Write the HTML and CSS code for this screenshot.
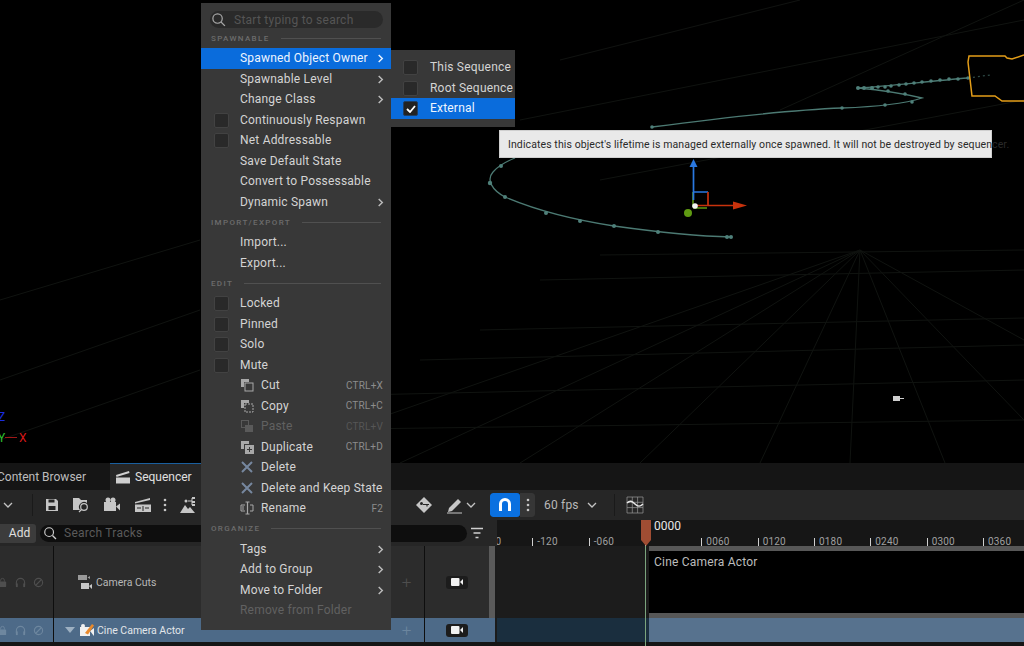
FILE: index.html
```html
<!DOCTYPE html>
<html lang="en">
<head>
<meta charset="utf-8">
<title>Sequencer</title>
<link rel="stylesheet" href="styles.css">
</head>
<body>
<svg class="defs" width="0" height="0" aria-hidden="true">
  <symbol id="i-chev" viewBox="0 0 10 10"><path d="M3 1l4 4-4 4" fill="none" stroke="currentColor" stroke-width="1.6"/></symbol>
  <symbol id="i-down" viewBox="0 0 10 10"><path d="M1 3l4 4 4-4" fill="none" stroke="currentColor" stroke-width="1.3"/></symbol>
  <symbol id="i-search" viewBox="0 0 16 16"><circle cx="7" cy="7" r="5" fill="none" stroke="currentColor" stroke-width="1.3"/><path d="M10.8 10.8l4 4" stroke="currentColor" stroke-width="1.5"/></symbol>
  <symbol id="i-cut" viewBox="0 0 14 14"><path d="M1 1h8v3H4v5H1z" fill="currentColor"/><rect x="5" y="5" width="8" height="8" fill="none" stroke="currentColor"/></symbol>
  <symbol id="i-copy" viewBox="0 0 14 14"><path d="M1 1h8v3H4v5H1z" fill="currentColor"/><rect x="5" y="5" width="8" height="8" fill="none" stroke="currentColor" stroke-dasharray="2 1"/></symbol>
  <symbol id="i-paste" viewBox="0 0 14 14"><rect x="1.500" y="1.500" width="7" height="7" fill="none" stroke="currentColor"/><rect x="5" y="6" width="8" height="7" fill="currentColor"/></symbol>
  <symbol id="i-dup" viewBox="0 0 14 14"><path d="M1 1h8v3H4v5H1z" fill="currentColor"/><rect x="5" y="5" width="9" height="9" fill="currentColor"/><path d="M9.500 7v5M7 9.500h5" stroke="#383838"/></symbol>
  <symbol id="i-x" viewBox="0 0 14 14"><path d="M2 2l10 10M12 2L2 12" stroke="currentColor" stroke-width="2"/></symbol>
  <symbol id="i-rename" viewBox="0 0 14 14"><path d="M5 4H1v6h4M10 4h3v6h-3" fill="none" stroke="currentColor"/><path d="M2 6h2M2 8h2" stroke="currentColor"/><path d="M5.500 1h4M5.500 13h4M7.500 1v12" stroke="currentColor" stroke-width="1.200" fill="none"/></symbol>
  <symbol id="i-lock" viewBox="0 0 12 12"><rect x="2" y="5" width="8" height="6" rx="1" fill="currentColor"/><path d="M4 5V3.500a2 2 0 014 0V5" fill="none" stroke="currentColor"/></symbol>
  <symbol id="i-head" viewBox="0 0 12 12"><path d="M1.500 9V6a4.500 4.500 0 019 0v3" fill="none" stroke="currentColor" stroke-width="1.200"/><rect x="1" y="7" width="2" height="4" fill="currentColor"/><rect x="9" y="7" width="2" height="4" fill="currentColor"/></symbol>
  <symbol id="i-ban" viewBox="0 0 12 12"><circle cx="6" cy="6" r="4.500" fill="none" stroke="currentColor" stroke-width="1.200"/><path d="M3 9l6-6" stroke="currentColor" stroke-width="1.200"/></symbol>
  <symbol id="i-cam" viewBox="0 0 14 10"><rect x="1" y="1" width="8.500" height="8" rx="1" fill="currentColor"/><path d="M10 5l3-3v6z" fill="currentColor"/></symbol>
  <symbol id="i-dots" viewBox="0 0 4 14"><circle cx="2" cy="2" r="1.300" fill="currentColor"/><circle cx="2" cy="7" r="1.300" fill="currentColor"/><circle cx="2" cy="12" r="1.300" fill="currentColor"/></symbol>
</svg>

<main class="app">
  <section class="viewport">
    <svg class="scene" width="1024" height="463" viewBox="0 0 1024 463" aria-hidden="false">
      <g class="grid">
        <path d="M860 250L250 463M860 250L400 463M860 250L520 463M860 250L640 463M860 250L760 463M860 250L850 463M860 250L945 463M860 250L1024 420M860 250L1024 340"/>
        <path d="M480 330L1024 318M420 360L1024 345M360 395L1024 380M280 430L1024 420M0 380L200 310M0 440L200 370M0 300L200 240M540 280L1024 270M600 255L1024 250"/>
        <path d="M520 120L1024 20M600 180L1024 100M780 110L1024 0M560 60L800 0"/>
      </g>
      <g class="path-line">
        <path d="M731 237C690 236 650 231 614 226C575 220 540 212 505 197C492 190 486 180 493 172C498 166 505 162 515 158"/>
        <path d="M652 127C720 118 790 110 842 108C870 107 900 105 922 98C905 94 880 90 858 88C890 86 930 81 968 78"/>
        <path class="dash" d="M968 78L990 75"/>
      </g>
      <g class="path-dots">
        <circle cx="731" cy="237" r="2"/><circle cx="727" cy="237" r="2"/><circle cx="658" cy="232" r="2"/><circle cx="614" cy="226" r="2"/><circle cx="580" cy="221" r="2"/><circle cx="546" cy="213" r="2"/><circle cx="505" cy="197" r="2"/><circle cx="490" cy="183" r="2.200"/><circle cx="501" cy="166" r="2"/>
        <circle cx="652" cy="127" r="1.800"/><circle cx="842" cy="108" r="1.800"/><circle cx="885" cy="105" r="1.800"/><circle cx="912" cy="102" r="1.800"/><circle cx="888" cy="91" r="1.800"/><circle cx="905" cy="94" r="1.800"/><circle cx="858" cy="88" r="2"/><circle cx="864" cy="88" r="2"/><circle cx="872" cy="88" r="2"/><circle cx="878" cy="87" r="1.800"/><circle cx="885" cy="87" r="1.800"/><circle cx="891" cy="86" r="1.800"/><circle cx="899" cy="85" r="1.800"/><circle cx="906" cy="84" r="1.800"/><circle cx="914" cy="83" r="1.800"/><circle cx="922" cy="82" r="1.800"/><circle cx="931" cy="81" r="1.800"/><circle cx="940" cy="80" r="1.800"/><circle cx="949" cy="79" r="1.800"/><circle cx="958" cy="79" r="1.800"/><circle cx="968" cy="78" r="1.800"/>
      </g>
      <path class="frustum" d="M1024 55L1012 59L1007 58L1005 56H969L968 62L972 96H995L1002 101H1024"/>
      <g class="gizmo">
        <path class="g" d="M693 192V207M693 208H707"/>
        <path class="b" d="M693.500 200V165M693 192H708"/>
        <path class="bf" d="M693.500 159l4 8h-8z"/>
        <path class="r" d="M708 192V205M695 205.500H735"/>
        <path class="rf" d="M733 201.500l14 4-14 4z"/>
        <circle class="gd" cx="688" cy="213" r="4"/>
        <circle class="wd" cx="695" cy="206" r="2.800"/>
      </g>
      <g class="marker"><rect x="893" y="396" width="7" height="5"/><path d="M900 398.500h4"/></g>
      <g class="axis">
        <path d="M5 437.500H17"/>
        <text class="az" x="-2" y="421">Z</text>
        <text class="ay" x="-2" y="442">Y</text>
        <text class="ax" x="19" y="442">X</text>
      </g>
    </svg>
  </section>

  <section class="panel">
    <div class="tabs">
      <div class="tab">Content Browser</div>
      <div class="tab tab-active">
        <svg class="tab-icon" width="16" height="14" viewBox="0 0 16 14"><path d="M1 5L14 1l.5 2L1.500 7z" fill="#cfcfcf"/><rect x="1" y="7.500" width="14" height="6" fill="#cfcfcf"/></svg>
        Sequencer
      </div>
    </div>

    <div class="toolbar">
      <svg class="tb-chev"><use href="#i-down"/></svg>
      <span class="tb-sep"></span>
      <svg class="tb-i save" viewBox="0 0 14 14"><path d="M1 1h10l2 2v10H1z" fill="currentColor"/><rect x="3.500" y="1.500" width="6" height="3" fill="#262626"/><rect x="3.500" y="8" width="7" height="4" fill="#262626"/></svg>
      <svg class="tb-i folder" viewBox="0 0 18 18"><path d="M1 2h6l2 2h6v3a5 5 0 00-7 7H1z" fill="currentColor"/><circle cx="12" cy="11" r="3.300" fill="none" stroke="currentColor" stroke-width="1.200"/><path d="M9.500 13.500L7 16" stroke="currentColor" stroke-width="1.200"/></svg>
      <svg class="tb-i cam" viewBox="0 0 18 16"><circle cx="5" cy="3" r="2.500" fill="currentColor"/><circle cx="10" cy="3" r="2.500" fill="currentColor"/><rect x="1" y="5" width="12" height="9" fill="currentColor"/><path d="M13 9.500l4-3v7z" fill="currentColor"/></svg>
      <svg class="tb-i clap" viewBox="0 0 18 16"><path d="M1 5L16 1v2L1 6.500z" fill="currentColor"/><rect x="1" y="7.500" width="16" height="7.500" fill="currentColor"/><path d="M9 9v5M3 11h4M11 11h4" stroke="#262626"/></svg>
      <svg class="tb-dots"><use href="#i-dots"/></svg>
      <svg class="tb-i tree" viewBox="0 0 18 18"><path d="M1 17l5-8 3 4 2-2 5 6z" fill="currentColor"/><circle cx="7" cy="5" r="1.500" fill="currentColor"/><path d="M9 5h4M13 2v7" stroke="currentColor"/><rect x="13" y="1" width="3" height="2" fill="currentColor"/><rect x="13" y="5" width="3" height="2" fill="currentColor"/><rect x="13" y="8" width="3" height="2" fill="currentColor"/></svg>

      <svg class="tb-i key" viewBox="0 0 18 18"><path d="M9 1l8 8-8 8-8-8z" fill="currentColor"/><circle cx="6.500" cy="7.500" r="1.500" fill="#262626"/><path d="M8 8.500h6M12 8.500v2" stroke="#262626" stroke-width="1.200"/></svg>
      <svg class="tb-i pen" viewBox="0 0 18 18"><path d="M3 12L12 3l3 3-9 9-4 1z" fill="currentColor"/><path d="M1 17h15" stroke="currentColor"/></svg>
      <svg class="tb-chev pen-chev"><use href="#i-down"/></svg>
      <div class="snap">
        <span class="snap-on"><svg width="14" height="16" viewBox="0 0 14 16"><path d="M2.500 14V7a4.500 4.500 0 019 0v7" fill="none" stroke="#fff" stroke-width="3"/></svg></span>
        <span class="snap-more"><svg class="tb-dots"><use href="#i-dots"/></svg></span>
      </div>
      <span class="fps">60 fps</span>
      <svg class="tb-chev fps-chev"><use href="#i-down"/></svg>
      <span class="tb-sep sep-right"></span>
      <svg class="tb-i curve" viewBox="0 0 18 18"><path d="M1 1h16v16H1zM6.300 1v16M11.600 1v16M1 6.300h16M1 11.600h16" fill="none" stroke="#9a9a9a" stroke-width=".7"/><path d="M1 7c3-3 5-2 8 1s5 3 8 0" fill="none" stroke="#e8e8e8" stroke-width="1.500"/></svg>
    </div>

    <div class="filterbar">
      <div class="filter-left">
        <button class="add">Add</button>
        <div class="track-search">
          <svg class="ts-icon"><use href="#i-search"/></svg>
          <span>Search Tracks</span>
        </div>
        <svg class="funnel" width="14" height="12" viewBox="0 0 14 12"><path d="M1 1.500h12M3.500 6h7M5.500 10.500h3" stroke="#cfcfcf" stroke-width="1.500"/></svg>
      </div>
      <div class="ruler">
        <div class="ticks">
          <span class="tick">-180</span><span class="tick">-120</span><span class="tick">-060</span><span class="tick tick-zero"></span><span class="tick">0060</span><span class="tick">0120</span><span class="tick">0180</span><span class="tick">0240</span><span class="tick">0300</span><span class="tick">0360</span>
        </div>
        <span class="frame-now">0000</span>
      </div>
    </div>

    <div class="tracks">
      <div class="track track-cuts">
        <div class="t-toggles">
          <svg><use href="#i-lock"/></svg><svg><use href="#i-head"/></svg><svg><use href="#i-ban"/></svg>
        </div>
        <div class="t-name name-cuts">
          <svg class="cuts-icon" viewBox="0 0 14 16"><path d="M0 1h9v5H0zM9.500 3.500L12 2v3z" fill="#9a9a9a"/><path d="M3 9h8v6H3zM11 12l3-2v5z" fill="#c8c8c8"/></svg>
          Camera Cuts
        </div>
        <div class="t-plus">+</div>
        <div class="t-cam"><span class="cam-btn"><svg width="14" height="10"><use href="#i-cam"/></svg></span></div>
        <div class="t-scroll"></div>
        <div class="t-lane lane-cuts">
          <div class="lane-pad"></div>
          <div class="section section-black">Cine Camera Actor</div>
        </div>
      </div>
      <div class="track track-actor">
        <div class="t-toggles">
          <svg><use href="#i-lock"/></svg><svg><use href="#i-head"/></svg><svg><use href="#i-ban"/></svg>
        </div>
        <div class="t-name name-actor">
          <span class="tri"></span>
          <svg class="actor-icon" viewBox="0 0 14 14"><rect x="0" y="4" width="10" height="9" fill="#f0f0f0"/><path d="M10 8l4-3v8z" fill="#f0f0f0"/><circle cx="3" cy="3" r="2" fill="#f0f0f0"/><path d="M5 10L12 1l2 1.500-6 9z" fill="#e8892c"/></svg>
          Cine Camera Actor
        </div>
        <div class="t-plus">+</div>
        <div class="t-cam"><span class="cam-btn"><svg width="14" height="10"><use href="#i-cam"/></svg></span></div>
        <div class="t-scroll t-scroll-off"></div>
        <div class="t-lane lane-actor">
          <div class="lane-pad"></div>
          <div class="section section-blue"></div>
        </div>
      </div>
    </div>
    <div class="playhead"><svg width="12" height="26" viewBox="0 0 12 26"><path d="M1 0h10v20l-5 6-5-6z" fill="#a04d33"/></svg></div>
    <div class="playline"></div>
  </section>
</main>

<nav class="menu main-menu">
  <div class="menu-search">
    <svg><use href="#i-search"/></svg>
    <span>Start typing to search</span>
  </div>
  <div class="head">SPAWNABLE</div>
  <div class="row row-on"><span class="label">Spawned Object Owner</span><svg class="more"><use href="#i-chev"/></svg></div>
  <div class="row"><span class="label">Spawnable Level</span><svg class="more"><use href="#i-chev"/></svg></div>
  <div class="row"><span class="label">Change Class</span><svg class="more"><use href="#i-chev"/></svg></div>
  <div class="row"><span class="box"></span><span class="label">Continuously Respawn</span></div>
  <div class="row"><span class="box"></span><span class="label">Net Addressable</span></div>
  <div class="row"><span class="label">Save Default State</span></div>
  <div class="row"><span class="label">Convert to Possessable</span></div>
  <div class="row"><span class="label">Dynamic Spawn</span><svg class="more"><use href="#i-chev"/></svg></div>
  <div class="head">IMPORT/EXPORT</div>
  <div class="row"><span class="label">Import...</span></div>
  <div class="row"><span class="label">Export...</span></div>
  <div class="head">EDIT</div>
  <div class="row"><span class="box"></span><span class="label">Locked</span></div>
  <div class="row"><span class="box"></span><span class="label">Pinned</span></div>
  <div class="row"><span class="box"></span><span class="label">Solo</span></div>
  <div class="row"><span class="box"></span><span class="label">Mute</span></div>
  <div class="row"><svg class="ico"><use href="#i-cut"/></svg><span class="label">Cut</span><span class="key-hint">CTRL+X</span></div>
  <div class="row"><svg class="ico"><use href="#i-copy"/></svg><span class="label">Copy</span><span class="key-hint">CTRL+C</span></div>
  <div class="row row-off"><svg class="ico"><use href="#i-paste"/></svg><span class="label">Paste</span><span class="key-hint">CTRL+V</span></div>
  <div class="row"><svg class="ico"><use href="#i-dup"/></svg><span class="label">Duplicate</span><span class="key-hint">CTRL+D</span></div>
  <div class="row"><svg class="ico ico-x"><use href="#i-x"/></svg><span class="label">Delete</span></div>
  <div class="row"><svg class="ico ico-x"><use href="#i-x"/></svg><span class="label">Delete and Keep State</span></div>
  <div class="row"><svg class="ico"><use href="#i-rename"/></svg><span class="label">Rename</span><span class="key-hint">F2</span></div>
  <div class="head">ORGANIZE</div>
  <div class="row"><span class="label">Tags</span><svg class="more"><use href="#i-chev"/></svg></div>
  <div class="row"><span class="label">Add to Group</span><svg class="more"><use href="#i-chev"/></svg></div>
  <div class="row"><span class="label">Move to Folder</span><svg class="more"><use href="#i-chev"/></svg></div>
  <div class="row row-off"><span class="label">Remove from Folder</span></div>
</nav>

<nav class="menu sub-menu">
  <div class="row"><span class="box"></span><span class="label">This Sequence</span></div>
  <div class="row"><span class="box"></span><span class="label">Root Sequence</span></div>
  <div class="row row-on"><span class="box box-on"><svg width="10" height="8" viewBox="0 0 10 8"><path d="M1 4l3 3 5-6" fill="none" stroke="#fff" stroke-width="1.800"/></svg></span><span class="label">External</span></div>
</nav>

<div class="tooltip">Indicates this object's lifetime is managed externally once spawned. It will not be destroyed by sequencer.</div>
</body>
</html>
```
FILE: styles.css
```css
* { box-sizing: border-box; }
html, body { margin: 0; padding: 0; }
body {
  width: 1024px;
  height: 646px;
  overflow: hidden;
  position: relative;
  background: #000;
  font-family: Roboto, "Liberation Sans", sans-serif;
  color: #c8c8c8;
}
.defs { position: absolute; }
.app { display: flex; flex-direction: column; height: 646px; }
.viewport { height: 463px; flex: none; background: #000; overflow: hidden; }
.scene { display: block; }
.grid path { stroke: #101310; stroke-width: 1; fill: none; }
.path-line path { fill: none; stroke: #4c7a73; stroke-width: 1.300; }
.path-line .dash { stroke: #2e4a46; stroke-dasharray: 2 3; }
.path-dots circle { fill: #4f807a; }
.frustum { fill: none; stroke: #e39d18; stroke-width: 1.500; }
.gizmo path { fill: none; stroke-width: 1.500; }
.gizmo .g { stroke: #5f9a12; }
.gizmo .b { stroke: #2a78e0; stroke-width: 1.700; }
.gizmo .r { stroke: #c8320c; stroke-width: 1.700; }
.gizmo .bf { fill: #2a78e0; stroke: none; }
.gizmo .rf { fill: #c8320c; stroke: none; }
.gd { fill: #5f9a12; }
.wd { fill: #f4f4f4; }
.marker rect { fill: #cfcfcf; }
.marker path { stroke: #cfcfcf; }
.axis path { stroke: #a01818; }
.axis text { font-size: 12px; font-family: Roboto, sans-serif; }
.az { fill: #1a2ce0; }
.ay { fill: #2fc02f; }
.ax { fill: #d81818; }

/* Bottom panel */
.panel { flex: 1; position: relative; display: flex; flex-direction: column; background: #151515; overflow: hidden; }
.tabs { height: 27px; flex: none; display: flex; background: #151515; padding-left: 0; }
.tab { font-size: 12px; color: #bdbdbd; display: flex; align-items: center; margin-left: -3px; width: 113px; }
.tab-active { margin-left: 0; width: 130px; background: #262626; border-top: 1px solid #1a5f9e; color: #e0e0e0; padding-left: 5px; gap: 2px; }
.tab-icon { margin-right: 2px; }

.toolbar { height: 30px; flex: none; display: flex; align-items: center; background: #262626; color: #c4c4c4; }
.tb-chev { width: 10px; height: 10px; color: #c4c4c4; flex: none; margin-left: 3px; }
.tb-sep { width: 1px; height: 22px; background: #1a1a1a; flex: none; margin-left: 19px; }
.tb-i { flex: none; width: 18px; height: 18px; color: #c6c6c6; }
.tb-dots { width: 4px; height: 14px; color: #c6c6c6; flex: none; }
.save { width: 14px; height: 14px; margin-left: 12px; }
.folder { margin-left: 13px; }
.cam { margin-left: 13px; }
.clap { margin-left: 13px; }
.toolbar > .tb-dots { margin-left: 11px; }
.tree { margin-left: 12px; }
.key { margin-left: 218px; }
.pen { margin-left: 13px; }
.pen-chev { margin-left: 2px; }
.snap { display: flex; height: 24px; margin-left: 14px; flex: none; border-radius: 3px; overflow: hidden; background: #1a1a1a; }
.snap-on { width: 30px; background: #0a70e0; display: flex; align-items: center; justify-content: center; border-radius: 3px; }
.snap-more { width: 15px; background: #363636; display: flex; align-items: center; justify-content: center; margin-left: 0; }
.fps { font-size: 12px; color: #b8b8b8; margin-left: 9px; width: 35px; flex: none; letter-spacing: .2px; }
.fps-chev { margin-left: 8px; }
.sep-right { margin-left: 17px; }
.curve { margin-left: 11px; }

.filterbar { height: 26px; flex: none; display: flex; }
.filter-left { width: 497px; flex: none; background: #262626; display: flex; align-items: center; position: relative; }
.add { width: 36px; height: 19px; margin-left: 0; padding: 0 0 0 3px; border: 0; border-radius: 0 3px 3px 0; background: #3c3c3c; color: #e0e0e0; font: 12px Roboto, sans-serif; flex: none; }
.track-search { width: 427px; height: 17px; margin-left: 4px; background: #0e0e0e; border-radius: 9px; display: flex; align-items: center; padding-left: 2px; flex: none; font-size: 12px; color: #5a5a5a; letter-spacing: .25px; }
.ts-icon { width: 14px; height: 14px; color: #cfcfcf; margin-right: 7px; margin-left: 1px; }
.funnel { margin-left: 3px; flex: none; }
.ruler { flex: 1; position: relative; overflow: hidden; background: #161616; }
.ticks { display: flex; position: absolute; left: -21px; bottom: 0; }
.tick { width: 56.33px; height: 8px; flex: none; border-left: 1px solid #d0d0d0; font-size: 10px; line-height: 8px; color: #a0a0a0; padding-left: 4px; letter-spacing: .2px; }
.frame-now { position: absolute; left: 157px; top: 0; font-size: 12px; line-height: 13px; color: #e6e6e6; }

.tracks { display: flex; flex-direction: column; flex: none; }
.track { display: grid; grid-template-columns: 53px 336px 36px 64px 8px 1fr; }
.track-cuts { height: 72px; background: #2c2c2c; }
.track-actor { height: 24px; background: #4d6a88; }
.track > div { min-width: 0; }
.t-toggles { display: flex; align-items: center; justify-content: flex-start; gap: 7px; padding-left: 0; margin-left: -3px; border-right: 0; color: #4e4e4e; }
.t-toggles svg { width: 11px; height: 11px; flex: none; }
.track-actor .t-toggles { color: #6e879f; }
.t-name { display: flex; align-items: center; font-size: 10.500px; color: #b8b8b8; border-left: 1px solid #0e0e0e; }
.name-cuts { padding-left: 24px; }
.cuts-icon { width: 14px; height: 16px; margin-right: 4px; flex: none; }
.name-actor { color: #e2e6ea; padding-left: 11px; }
.tri { width: 0; height: 0; border-left: 5px solid transparent; border-right: 5px solid transparent; border-top: 6px solid #9db0c2; margin-right: 5px; flex: none; }
.actor-icon { width: 14px; height: 14px; margin-right: 3px; flex: none; }
.t-plus { display: flex; align-items: center; justify-content: center; font-size: 17px; font-weight: 300; color: #4e4e4e; border-right: 1px solid #0e0e0e; }
.track-actor .t-plus { color: #6c869f; }
.t-cam { display: flex; align-items: center; justify-content: center; }
.cam-btn { width: 22px; height: 13px; background: #1c1c1c; color: #f2f2f2; border-radius: 3px; display: flex; align-items: center; justify-content: center; }
.t-scroll { background: #5a5a5a; border-right: 2px solid #1b1b1b; }
.t-scroll-off { background: #4d6a88; }
.t-lane { display: flex; }
.lane-pad { width: 150px; flex: none; }
.lane-cuts { background: #1c1c1c; }
.lane-actor { background: #1a2e3e; }
.section { flex: 1; }
.section-black { background: #000; border-top: 5px solid #575757; border-bottom: 5px solid #575757; font-size: 12px; padding: 4px 0 0 5px; color: #bcbcbc; margin-left: 2px; letter-spacing: .2px; }
.section-blue { background: #57728e; margin-left: 2px; }
.playhead { position: absolute; left: 640px; top: 57px; line-height: 0; }
.playline { position: absolute; left: 645px; top: 83px; bottom: 0; width: 1px; background: #7ba47d; }

/* Menus */
.menu { position: absolute; background: #383838; font-size: 12px; color: #d4d4d4; }
.main-menu { left: 201px; top: 3px; width: 190px; height: 627px; display: flex; flex-direction: column; padding-top: 8px; }
.sub-menu { left: 391px; top: 50px; width: 124px; height: 77px; padding-top: 7px; }
.menu-search { height: 17px; margin: 0 8px 0 9px; background: #2a2a2a; border-radius: 9px; display: flex; align-items: center; color: #555; letter-spacing: .25px; flex: none; padding-left: 1px; }
.menu-search svg { width: 15px; height: 15px; color: #a8a8a8; margin-right: 8px; flex: none; }
.head { height: 20px; flex: none; display: flex; align-items: center; gap: 11px; padding: 0 10px; font-size: 8px; font-weight: 500; letter-spacing: 1.350px; color: #6c6c6c; }
.head::after { content: ""; flex: 1; height: 1px; background: #505050; }
.main-menu .head:first-of-type { height: 22px; }
.row { height: 20.500px; flex: none; display: flex; align-items: center; position: relative; padding-left: 39px; letter-spacing: .2px; white-space: nowrap; }
.row-on { background: #0a6cdc; color: #eef5ff; }
.row-off { color: #616161; }
.box { position: absolute; left: 13px; top: 3px; width: 15px; height: 15px; background: #292929; border: 1px solid #424242; border-radius: 2px; display: flex; align-items: center; justify-content: center; }
.box-on { background: #222; border-color: #1e3e63; }
.more { position: absolute; right: 6px; top: 6px; width: 9px; height: 9px; color: #bcbcbc; }
.row-on .more { color: #e8f2ff; }
.ico { width: 14px; height: 14px; flex: none; margin-right: 7px; color: #a8a8a8; }
.row-off .ico { color: #5a5a5a; }
.ico-x { color: #76879f; }
.key-hint { position: absolute; right: 8px; font-size: 10px; color: #8c8c8c; letter-spacing: .2px; }
.row-off .key-hint { color: #565656; }
.sub-menu .row { padding-left: 39px; }
.sub-menu .box { left: 12px; }

.tooltip { position: absolute; left: 499px; top: 130px; width: 493px; height: 28px; background: #e9e9e9; border: 1px solid #cfcfcf; color: #2a2a2a; font-size: 10.500px; display: flex; align-items: center; padding-left: 8px; white-space: nowrap; letter-spacing: .1px; }
```
